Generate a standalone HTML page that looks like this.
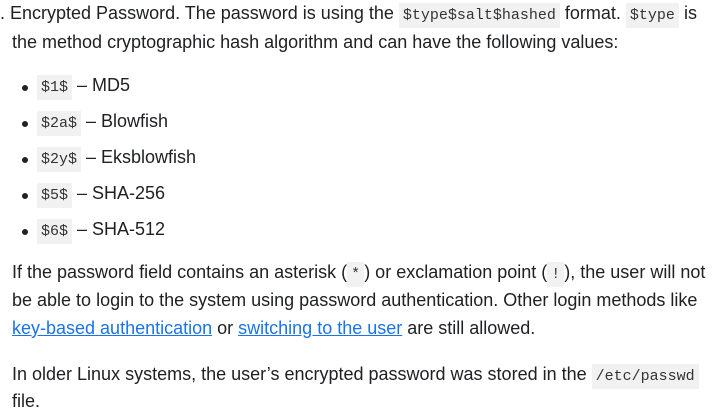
<!DOCTYPE html>
<html><head><style>
body{margin:0;background:#fff;width:727px;height:417px;overflow:hidden;font-family:"Liberation Sans",sans-serif;font-size:18px;color:#202124}
.l{position:absolute;left:12px;white-space:nowrap}
code{font-family:"Liberation Mono",monospace;font-size:15px;background:#f1f1f1;padding:4px 4px;letter-spacing:0;color:#333}
a{color:#1a73e8;text-decoration:underline}
.b{position:absolute;left:22px;width:6px;height:6px;border-radius:50%;background:#202124}
</style></head><body>
<div class="l" style="left:0;top:3px">. Encrypted Password. The password is using the <code>$type$salt$hashed</code> format. <code>$type</code> is</div>
<div class="l" style="top:32px">the method cryptographic hash algorithm and can have the following values:</div>
<div class="b" style="top:85px"></div><div class="l" style="left:37px;top:75px"><code>$1$</code> – MD5</div>
<div class="b" style="top:121px"></div><div class="l" style="left:37px;top:111px"><code>$2a$</code> – Blowfish</div>
<div class="b" style="top:157px"></div><div class="l" style="left:37px;top:147px"><code>$2y$</code> – Eksblowfish</div>
<div class="b" style="top:193px"></div><div class="l" style="left:37px;top:183px"><code>$5$</code> – SHA-256</div>
<div class="b" style="top:229px"></div><div class="l" style="left:37px;top:219px"><code>$6$</code> – SHA-512</div>
<div class="l" style="top:262px">If the password field contains an asterisk (<code>*</code>) or exclamation point (<code>!</code>), the user will not</div>
<div class="l" style="top:290px">be able to login to the system using password authentication. Other login methods like</div>
<div class="l" style="top:318px"><a>key-based authentication</a> or <a>switching to the user</a> are still allowed.</div>
<div class="l" style="top:364px">In older Linux systems, the user’s encrypted password was stored in the <code>/etc/passwd</code></div>
<div class="l" style="top:391px">file.</div>
</body></html>
